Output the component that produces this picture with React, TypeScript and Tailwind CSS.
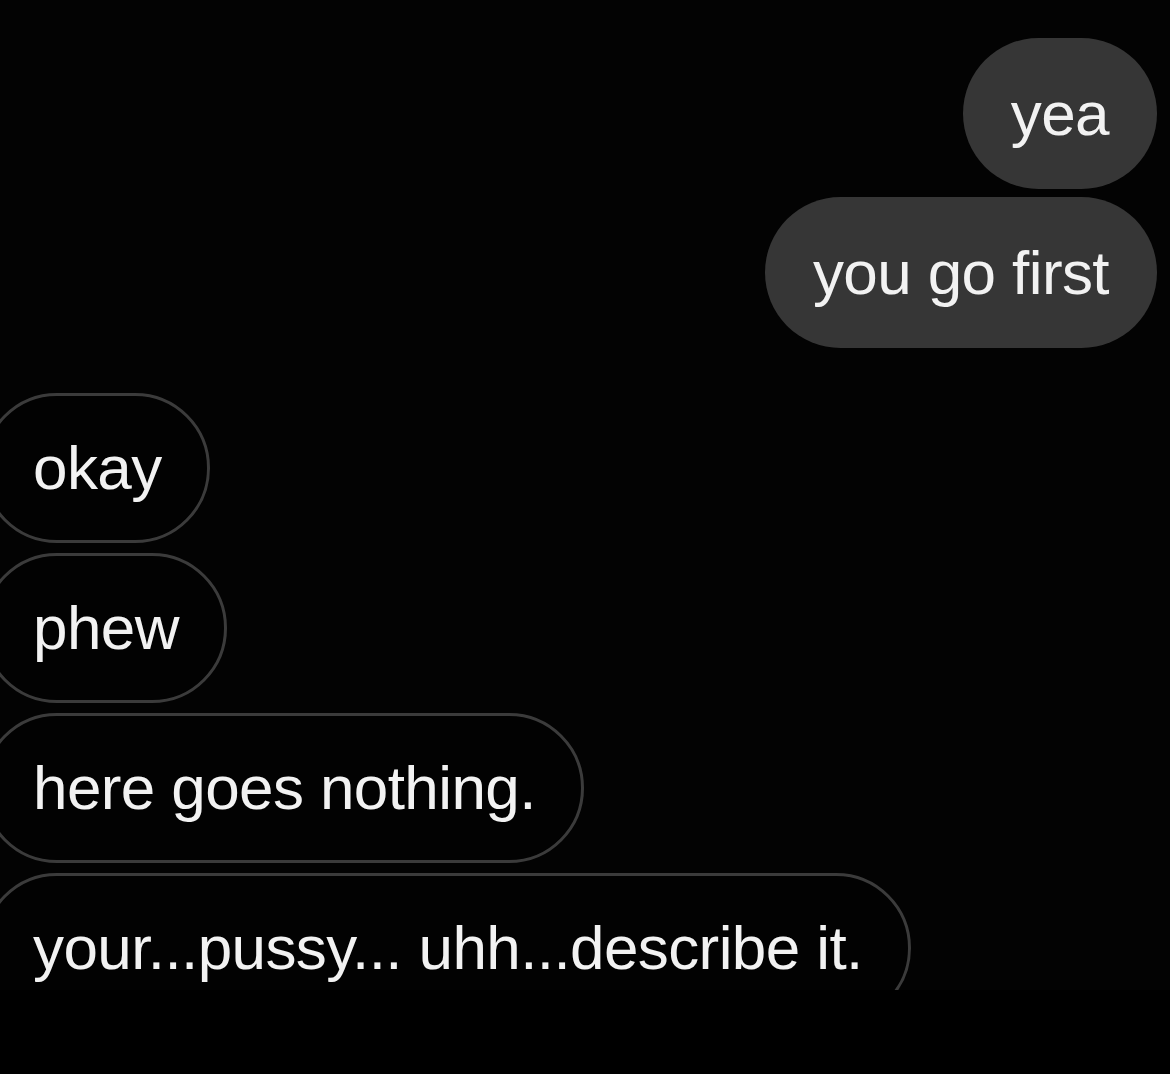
import React from "react";

const font = { fontFamily: '"Liberation Sans", Arial, sans-serif' };

function Sent({ text }: { text: string }) {
  return (
    <div className="h-[151px] rounded-full bg-[#363636] px-[48px] flex items-center text-[62px] leading-none text-[#f2f2f2] tracking-[-0.6px] whitespace-nowrap">
      {text}
    </div>
  );
}

function Received({ text }: { text: string }) {
  return (
    <div className="h-[150px] rounded-full border-[3px] border-[#3b3b3b] bg-[#020202] pl-[48px] pr-[45px] flex items-center text-[62px] leading-none text-[#f2f2f2] tracking-[-0.6px] whitespace-nowrap">
      {text}
    </div>
  );
}

export default function App() {
  return (
    <div className="w-[1170px] h-[1074px] bg-black overflow-hidden" style={font}>
      <div className="h-[990px] overflow-hidden bg-[#030303] flex flex-col pt-[38px]">
        <div className="flex flex-col items-end gap-[8px] pr-[13px]">
          <Sent text="yea" />
          <Sent text="you go first" />
        </div>
        <div className="mt-[45px] flex flex-col items-start gap-[10px] ml-[-18px]">
          <Received text="okay" />
          <Received text="phew" />
          <Received text="here goes nothing." />
          <Received text="your...pussy... uhh...describe it." />
        </div>
      </div>
    </div>
  );
}
